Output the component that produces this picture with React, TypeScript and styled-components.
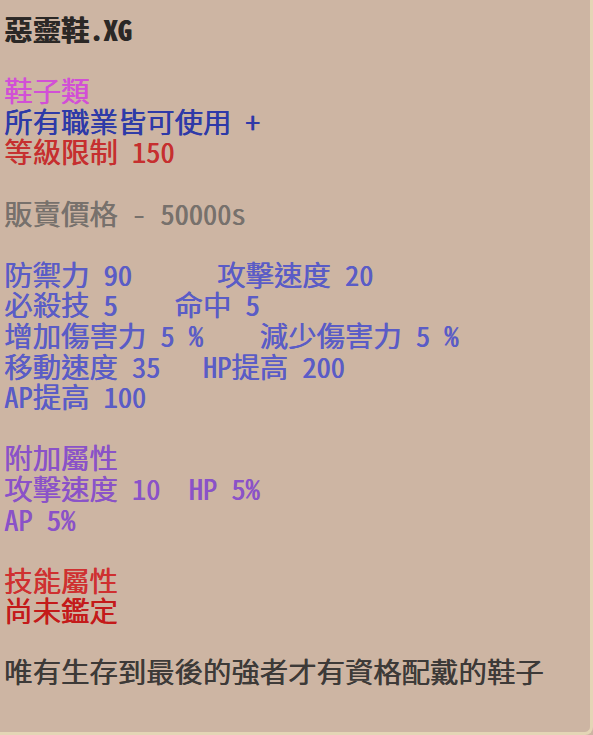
import React from "react";
import styled, { createGlobalStyle } from "styled-components";

const GlobalStyle = createGlobalStyle`
  html, body {
    margin: 0;
    padding: 0;
    background: #cdb5a3;
  }
`;

const tones = {
  title: "#2b2826",
  type: "#d24fd6",
  job: "#2e3aa8",
  level: "#c62f2f",
  price: "#77716c",
  stat: "#5a5cc6",
  bonus: "#8a52c8",
  skill: "#cf3030",
  unknown: "#c41a1a",
  desc: "#3d3a38",
};

type Tone = keyof typeof tones;

const Tooltip = styled.div`
  box-sizing: border-box;
  width: 593px;
  height: 735px;
  padding: 14px 0 0 4px;
  background: #cdb5a3;
  border-right: 3px solid #e4d6b6;
  border-bottom: 3px solid #e4d6b6;
  border-bottom-right-radius: 8px;
  font-family: "Noto Sans Mono CJK TC", "Noto Sans CJK TC", "Liberation Mono", monospace;
  font-size: 28.4px;
  line-height: 30.6px;
  overflow: hidden;
`;

const Line = styled.div<{ $tone: Tone; $bold?: boolean }>`
  height: 30.6px;
  white-space: pre;
  color: ${({ $tone }) => tones[$tone]};
  font-weight: ${({ $bold }) => ($bold ? 700 : 400)};
  text-shadow: 0.6px 0 0 currentColor;
`;

const Blank = styled.div`
  height: 30.6px;
`;

type Row = { text: string; tone: Tone; bold?: boolean } | null;

const rows: Row[] = [
  { text: "惡靈鞋.XG", tone: "title", bold: true },
  null,
  { text: "鞋子類", tone: "type" },
  { text: "所有職業皆可使用 +", tone: "job" },
  { text: "等級限制 150", tone: "level" },
  null,
  { text: "販賣價格 - 50000s", tone: "price" },
  null,
  { text: "防禦力 90      攻擊速度 20", tone: "stat" },
  { text: "必殺技 5    命中 5", tone: "stat" },
  { text: "增加傷害力 5 %    減少傷害力 5 %", tone: "stat" },
  { text: "移動速度 35   HP提高 200", tone: "stat" },
  { text: "AP提高 100", tone: "stat" },
  null,
  { text: "附加屬性", tone: "bonus" },
  { text: "攻擊速度 10  HP 5%", tone: "bonus" },
  { text: "AP 5%", tone: "bonus" },
  null,
  { text: "技能屬性", tone: "skill" },
  { text: "尚未鑑定", tone: "unknown" },
  null,
  { text: "唯有生存到最後的強者才有資格配戴的鞋子", tone: "desc" },
];

export default function App() {
  return (
    <>
      <GlobalStyle />
      <Tooltip>
        {rows.map((row, i) =>
          row ? (
            <Line key={i} $tone={row.tone} $bold={row.bold}>
              {row.text}
            </Line>
          ) : (
            <Blank key={i} />
          )
        )}
      </Tooltip>
    </>
  );
}
